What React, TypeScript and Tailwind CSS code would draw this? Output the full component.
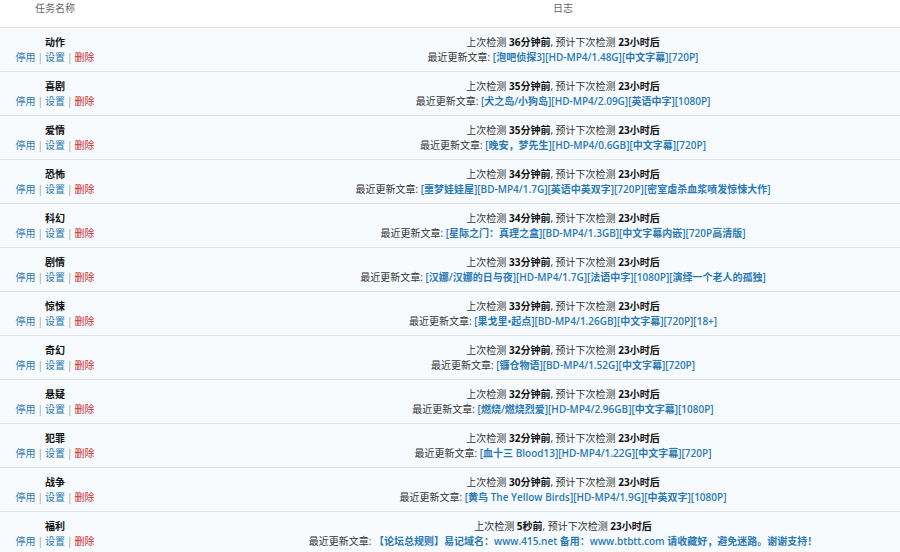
import React from "react";

type Row = { name: string; ago: string; title: string };

const rows: Row[] = [
  { name: "动作", ago: "36分钟前", title: "[泡吧侦探3][HD-MP4/1.48G][中文字幕][720P]" },
  { name: "喜剧", ago: "35分钟前", title: "[犬之岛/小狗岛][HD-MP4/2.09G][英语中字][1080P]" },
  { name: "爱情", ago: "35分钟前", title: "[晚安，梦先生][HD-MP4/0.6GB][中文字幕][720P]" },
  { name: "恐怖", ago: "34分钟前", title: "[噩梦娃娃屋][BD-MP4/1.7G][英语中英双字][720P][密室虐杀血浆喷发惊悚大作]" },
  { name: "科幻", ago: "34分钟前", title: "[星际之门：真理之盒][BD-MP4/1.3GB][中文字幕内嵌][720P高清版]" },
  { name: "剧情", ago: "33分钟前", title: "[汉娜/汉娜的日与夜][HD-MP4/1.7G][法语中字][1080P][演绎一个老人的孤独]" },
  { name: "惊悚", ago: "33分钟前", title: "[果戈里•起点][BD-MP4/1.26GB][中文字幕][720P][18+]" },
  { name: "奇幻", ago: "32分钟前", title: "[镰仓物语][BD-MP4/1.52G][中文字幕][720P]" },
  { name: "悬疑", ago: "32分钟前", title: "[燃烧/燃烧烈爱][HD-MP4/2.96GB][中文字幕][1080P]" },
  { name: "犯罪", ago: "32分钟前", title: "[血十三 Blood13][HD-MP4/1.22G][中文字幕][720P]" },
  { name: "战争", ago: "30分钟前", title: "[黄鸟 The Yellow Birds][HD-MP4/1.9G][中英双字][1080P]" },
  { name: "福利", ago: "5秒前", title: "【论坛总规则】易记域名：www.415.net 备用：www.btbtt.com 请收藏好，避免迷路。谢谢支持！" },
];

export default function App() {
  return (
    <div
      className="w-[900px] h-[552px] overflow-hidden bg-white text-[10px] leading-[15px] text-[#333]"
      style={{ fontFamily: '"Open Sans", "Noto Sans CJK SC", sans-serif' }}
    >
      <div className="w-[1016px]">
        <div className="grid grid-cols-[110px_1fr] h-[28px] border-b border-[#e2e2e2] text-[#666]">
          <div className="text-center pt-[1px]">任务名称</div>
          <div className="text-center pt-[1px]">日志</div>
        </div>
        {rows.map((r) => (
          <div
            key={r.name}
            className="grid grid-cols-[110px_1fr] h-[44px] border-b border-[#e4e4e4] bg-[#f7fbfe] pt-[7px]"
          >
            <div className="flex flex-col items-center">
              <div className="font-bold text-[#111]">{r.name}</div>
              <div className="flex items-center text-[#999]">
                <span className="text-[#2a79b3]">停用</span>
                <span className="mx-[2px]">|</span>
                <span className="text-[#2a79b3]">设置</span>
                <span className="mx-[2px]">|</span>
                <span className="text-[#c8322f]">删除</span>
              </div>
            </div>
            <div className="flex flex-col items-center">
              <div>
                上次检测 <b className="text-[#111]">{r.ago}</b>, 预计下次检测 <b className="text-[#111]">23小时后</b>
              </div>
              <div className="whitespace-nowrap">
                最近更新文章: <span className="text-[#2a79b3] font-semibold">{r.title}</span>
              </div>
            </div>
          </div>
        ))}
      </div>
    </div>
  );
}
